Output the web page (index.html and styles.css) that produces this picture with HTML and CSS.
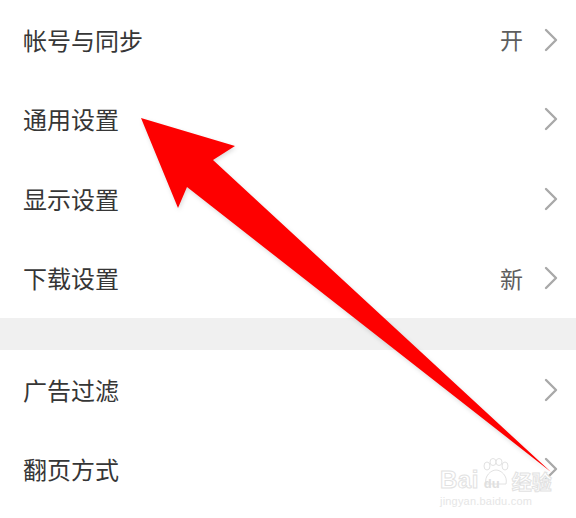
FILE: index.html
```html
<!DOCTYPE html>
<html lang="zh-CN">
<head>
<meta charset="utf-8">
<title>设置</title>
<link rel="stylesheet" href="styles.css">
</head>
<body>
<div class="page">
  <ul class="group">
    <li class="row"><span class="label">帐号与同步</span><span class="value">开</span><svg class="chev" viewBox="0 0 14 24"><path d="M2 2 L12 12 L2 22" /></svg></li>
    <li class="row"><span class="label">通用设置</span><svg class="chev" viewBox="0 0 14 24"><path d="M2 2 L12 12 L2 22" /></svg></li>
    <li class="row"><span class="label">显示设置</span><svg class="chev" viewBox="0 0 14 24"><path d="M2 2 L12 12 L2 22" /></svg></li>
    <li class="row"><span class="label">下载设置</span><span class="value">新</span><svg class="chev" viewBox="0 0 14 24"><path d="M2 2 L12 12 L2 22" /></svg></li>
  </ul>
  <div class="divider"></div>
  <ul class="group">
    <li class="row"><span class="label">广告过滤</span><svg class="chev" viewBox="0 0 14 24"><path d="M2 2 L12 12 L2 22" /></svg></li>
    <li class="row"><span class="label">翻页方式</span><svg class="chev" viewBox="0 0 14 24"><path d="M2 2 L12 12 L2 22" /></svg></li>
  </ul>

  <svg class="arrow" viewBox="0 0 576 518" width="576" height="518">
    <polygon points="141,118 235,146 213,160 551,472 187,187 178,208" />
  </svg>

  <div class="watermark">
    <div class="wm-top">
      <span class="wm-bai">Bai</span>
      <span class="wm-paw">
        <svg viewBox="0 0 30 30" width="30" height="30">
          <ellipse cx="7" cy="8" rx="3" ry="4"/>
          <ellipse cx="13" cy="4" rx="3" ry="3.5"/>
          <ellipse cx="19" cy="4" rx="3" ry="3.5"/>
          <ellipse cx="25" cy="8" rx="3" ry="4"/>
          <path d="M6 26 C4 18 11 12 16 12 C21 12 28 18 26 26 Z"/>
        </svg>
        <span class="wm-du">du</span>
      </span>
      <span class="wm-jy">经验</span>
    </div>
    <div class="wm-url">jingyan.baidu.com</div>
  </div>
</div>
</body>
</html>
```

FILE: styles.css
```css
html, body {
  margin: 0;
  padding: 0;
  background: #ffffff;
}

.page {
  position: relative;
  width: 576px;
  height: 518px;
  overflow: hidden;
  font-family: "Noto Sans CJK SC", "Noto Sans", sans-serif;
}

.group {
  list-style: none;
  margin: 0;
  padding: 0;
}

.row {
  display: flex;
  align-items: center;
  height: 79.5px;
  padding: 0 18px 0 23px;
}

.label {
  flex: 1;
  font-size: 24px;
  color: #363636;
  line-height: 1;
}

.value {
  font-size: 23px;
  color: #5e5e5e;
  line-height: 1;
  margin-right: 21px;
}

.chev {
  width: 14px;
  height: 24px;
}

.chev path {
  fill: none;
  stroke: #a9a9a9;
  stroke-width: 2.4;
  stroke-linecap: round;
  stroke-linejoin: round;
}

.divider {
  height: 32px;
  background: #f0f0f0;
}

.arrow {
  position: absolute;
  left: 0;
  top: 0;
  filter: drop-shadow(1px 2px 2px rgba(0, 0, 0, 0.14));
}

.arrow polygon {
  fill: #fe0000;
}

.watermark {
  position: absolute;
  left: 440px;
  top: 452px;
  width: 116px;
  color: #e8e8e8;
  font-family: "Liberation Sans", "Noto Sans CJK SC", sans-serif;
}

.wm-top {
  display: flex;
  align-items: flex-end;
  height: 40px;
}

.wm-bai {
  font-size: 24px;
  font-weight: bold;
  line-height: 1;
  letter-spacing: 0.5px;
  color: #ffffff;
  -webkit-text-stroke: 1px #e2e2e2;
}

.wm-paw {
  position: relative;
  width: 30px;
  height: 40px;
  margin-left: 1px;
}

.wm-paw svg {
  position: absolute;
  left: 0;
  top: 6px;
}

.wm-paw svg ellipse,
.wm-paw svg path {
  fill: #ffffff;
  stroke: #e2e2e2;
  stroke-width: 1;
}

.wm-du {
  position: absolute;
  left: 4px;
  bottom: 2px;
  font-size: 13px;
  font-weight: bold;
  color: #e0e0e0;
  line-height: 1;
}

.wm-jy {
  font-family: "Noto Sans CJK SC", sans-serif;
  font-size: 20px;
  font-weight: bold;
  line-height: 1;
  color: #ffffff;
  -webkit-text-stroke: 1px #e2e2e2;
  margin-left: 2px;
}

.wm-url {
  margin-top: 3px;
  font-size: 11px;
  color: #e6e6e6;
  letter-spacing: 0.2px;
}
```
